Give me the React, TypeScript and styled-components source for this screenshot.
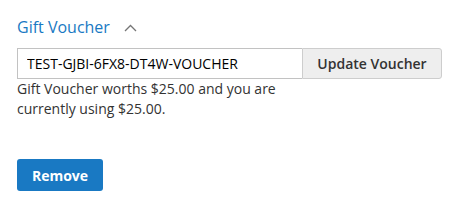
import styled, { createGlobalStyle } from "styled-components";

const GlobalStyle = createGlobalStyle`
  body {
    margin: 0;
    background: #fff;
    font-family: "Open Sans", "Liberation Sans", sans-serif;
    color: #333;
  }
`;

const Panel = styled.div`
  padding: 17px 17px 0 17px;
`;

const TitleRow = styled.div`
  display: flex;
  align-items: center;
  gap: 14px;
  height: 20px;
  margin-bottom: 11px;
  cursor: pointer;
`;

const Title = styled.span`
  color: #1979c3;
  font-size: 16px;
  line-height: 20px;
`;

const Chevron = styled.svg`
  width: 13px;
  height: 8px;
  margin-top: 2px;
`;

const VoucherRow = styled.div`
  display: flex;
  width: 425px;
  height: 31px;
`;

const VoucherInput = styled.input`
  width: 285px;
  height: 31px;
  box-sizing: border-box;
  border: 1px solid #c2c2c2;
  border-right: none;
  padding: 0 9px;
  font-family: "Open Sans", "Liberation Sans", sans-serif;
  font-size: 14px;
  color: #000;
  outline: none;
`;

const UpdateButton = styled.button`
  width: 140px;
  height: 31px;
  box-sizing: border-box;
  border: 1px solid #cdcdcd;
  border-radius: 0 3px 3px 0;
  background: #eee;
  color: #333;
  font-family: "Open Sans", "Liberation Sans", sans-serif;
  font-size: 14px;
  font-weight: 600;
  cursor: pointer;
`;

const Note = styled.p`
  margin: 0;
  width: 290px;
  font-size: 14px;
  line-height: 20px;
  color: #333;
`;

const RemoveButton = styled.button`
  margin-top: 40px;
  width: 86px;
  height: 32px;
  border: none;
  border-radius: 3px;
  background: #1979c3;
  color: #fff;
  font-family: "Open Sans", "Liberation Sans", sans-serif;
  font-size: 14px;
  font-weight: 700;
  cursor: pointer;
`;

const App = () => {
  return (
    <>
      <GlobalStyle />
      <Panel>
        <TitleRow>
          <Title>Gift Voucher</Title>
          <Chevron viewBox="0 0 13 8">
            <path d="M1 7 L6.5 1.5 L12 7" fill="none" stroke="#757575" strokeWidth="1.3" />
          </Chevron>
        </TitleRow>
        <VoucherRow>
          <VoucherInput defaultValue="TEST-GJBI-6FX8-DT4W-VOUCHER" />
          <UpdateButton>Update Voucher</UpdateButton>
        </VoucherRow>
        <Note>Gift Voucher worths $25.00 and you are currently using $25.00.</Note>
        <RemoveButton>Remove</RemoveButton>
      </Panel>
    </>
  );
};

export default App;
